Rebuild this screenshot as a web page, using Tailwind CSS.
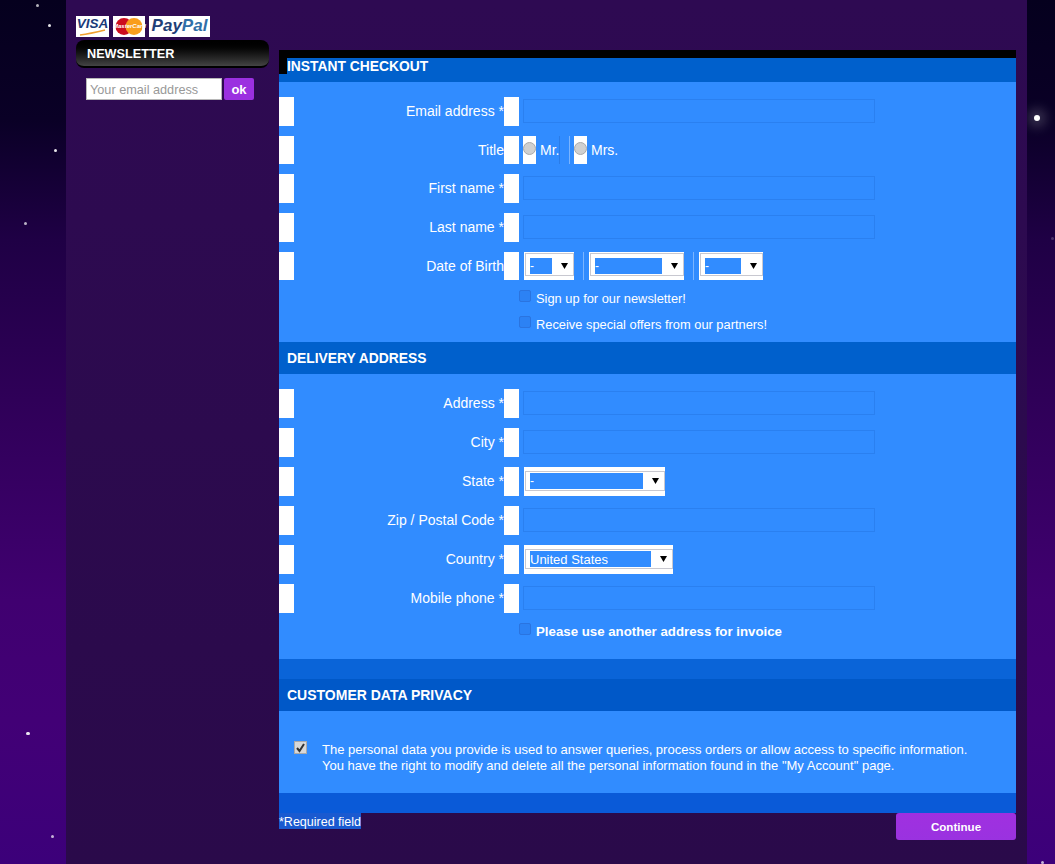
<!DOCTYPE html>
<html>
<head>
<meta charset="utf-8">
<title>Checkout</title>
<script src="https://cdn.jsdelivr.net/npm/@tailwindcss/browser@4"></script>
</head>
<body class="h-[864px] overflow-hidden bg-[linear-gradient(180deg,#05001e_0px,#0a0026_120px,#1f0045_240px,#2f0058_400px,#400070_600px,#420076_720px,#3c007a_864px)] font-['Liberation_Sans',Arial,sans-serif] text-white">

<!-- stars -->
<div class="relative h-[864px]">
  <span class="absolute left-[36px] top-[4px] w-[3px] h-[3px] rounded-full bg-white/70"></span>
  <span class="absolute left-[48px] top-[24px] w-[3px] h-[3px] rounded-full bg-white/90"></span>
  <span class="absolute left-[54px] top-[149px] w-[3px] h-[3px] rounded-full bg-white/90"></span>
  <span class="absolute left-[24px] top-[222px] w-[3px] h-[3px] rounded-full bg-white/70"></span>
  <span class="absolute left-[26px] top-[732px] w-[4px] h-[3px] rounded-full bg-white/90"></span>
  <span class="absolute left-[51px] top-[835px] w-[3px] h-[3px] rounded-full bg-white/70"></span>
  <span class="absolute left-[1034px] top-[115px] w-[6px] h-[6px] rounded-full bg-white shadow-[0_0_12px_6px_rgba(255,255,255,0.2)]"></span>
  <span class="absolute left-[1051px] top-[237px] w-[3px] h-[3px] rounded-full bg-white/20"></span>
  <span class="absolute left-[1041px] top-[861px] w-[3px] h-[3px] rounded-full bg-white/70"></span>

  <div class="absolute left-[66px] top-0 w-[961px] h-[864px] bg-gradient-to-b from-[#2e0a52] to-[#2a0a4a] flex">
    <!-- left column -->
    <aside class="w-[213px] pl-[10px] pt-[16px] shrink-0">
      <div class="flex gap-[4px] h-[21px]">
        <div class="relative w-[33px] bg-white text-center text-[13.5px] font-bold italic leading-[16px] text-[#1a3a7a]">VISA
          <svg viewBox="0 0 33 21" class="absolute left-0 top-0 w-[33px] h-[21px]"><path d="M4 19c8-1 17-3 25-5" fill="none" stroke="#f0a030" stroke-width="1.5"/></svg>
        </div>
        <div class="relative w-[32px] bg-white">
          <svg viewBox="0 0 32 21" class="w-[32px] h-[21px]"><circle cx="11" cy="10.5" r="8.5" fill="#cc0d1e"/><circle cx="21" cy="10.5" r="8.5" fill="#f99d1c"/></svg>
          <span class="absolute left-0 top-0 w-[32px] text-center text-[6px] font-bold italic leading-[21px] text-white">MasterCard</span>
        </div>
        <div class="w-[61px] bg-white text-center text-[17px] font-bold italic leading-[20px] text-[#1f3f77]">Pay<span class="text-[#2f6ea8]">Pal</span></div>
      </div>
      <div class="mt-[3px] w-[193px] h-[28px] rounded-[8px] bg-gradient-to-b from-[#000000] to-[#444444] border-b-2 border-black pl-[11px] text-[12.7px] font-bold leading-[29px]">NEWSLETTER</div>
      <div class="mt-[10px] ml-[10px] flex gap-[2px]">
        <div class="w-[136px] h-[22px] bg-white border border-[#b8b8b8] text-[12.7px] leading-[22px] pl-[3px] text-[#999999]">Your email address</div>
        <div class="w-[30px] h-[22px] rounded-[2px] bg-[#9b30e0] text-center text-[13px] font-bold leading-[23px]">ok</div>
      </div>
    </aside>

    <!-- checkout -->
    <main class="w-[737px] pt-[50px] shrink-0">
      <div class="h-[8px] bg-black"></div>
      <h2 class="relative h-[24px] bg-[#0060cc] pl-[8px] text-[13.85px] font-bold leading-[16px]">
        <span class="absolute left-0 top-0 w-[8px] h-[16px] bg-black"></span>INSTANT CHECKOUT
      </h2>
      <div class="h-[260px] bg-[#318cff] pt-[15px] text-[14px]">
        <div class="grid grid-cols-[15px_210px_15px_1fr] h-[29px] mb-[10px] items-stretch">
          <i class="bg-white"></i><label class="text-right leading-[29px] whitespace-nowrap">Email address *</label><i class="bg-white"></i>
          <div class="pl-[4px] pt-[2px]"><div class="w-[352px] h-[24px] border border-[#2a80f0]"></div></div>
        </div>
        <div class="grid grid-cols-[15px_210px_15px_1fr] h-[28px] mb-[10px] items-stretch">
          <i class="bg-white"></i><label class="text-right leading-[28px]">Title</label><i class="bg-white"></i>
          <div class="pl-[4px] flex">
            <span class="w-[13px] bg-white flex items-center justify-center"><span class="w-[13px] h-[13px] rounded-full bg-[#d0d0d0] border border-[#aaaaaa] mb-[3px]"></span></span>
            <span class="ml-[4px] w-[19px] leading-[28px]">Mr.</span>
            <span class="w-[1px] bg-[#2a7ce8]"></span>
            <span class="ml-[9px] w-[1px] bg-[#7ab4ff]"></span>
            <span class="ml-[4px] w-[13px] bg-white flex items-center justify-center"><span class="w-[13px] h-[13px] rounded-full bg-[#d0d0d0] border border-[#aaaaaa] mb-[3px]"></span></span>
            <span class="ml-[4px] leading-[28px]">Mrs.</span>
          </div>
        </div>
        <div class="grid grid-cols-[15px_210px_15px_1fr] h-[29px] mb-[10px] items-stretch">
          <i class="bg-white"></i><label class="text-right leading-[29px]">First name *</label><i class="bg-white"></i>
          <div class="pl-[4px] pt-[2px]"><div class="w-[352px] h-[24px] border border-[#2a80f0]"></div></div>
        </div>
        <div class="grid grid-cols-[15px_210px_15px_1fr] h-[29px] mb-[10px] items-stretch">
          <i class="bg-white"></i><label class="text-right leading-[29px]">Last name *</label><i class="bg-white"></i>
          <div class="pl-[4px] pt-[2px]"><div class="w-[352px] h-[24px] border border-[#2a80f0]"></div></div>
        </div>
        <div class="grid grid-cols-[15px_210px_15px_1fr] h-[28px] items-stretch">
          <i class="bg-white"></i><label class="text-right leading-[28px]">Date of Birth</label><i class="bg-white"></i>
          <div class="pl-[5px] flex">
            <div class="w-[50px] bg-white pl-[1px]"><div class="h-[23px] mt-[1px] border border-[#c8c8d0] pl-[4px] pt-[4px] flex items-start"><span class="w-[22px] h-[16px] bg-[#318cff] text-[12px] leading-[16px]">-</span><svg viewBox="0 0 7 6" class="ml-[9px] mt-[5px] w-[7px] h-[6px]"><path d="M0 0h7L3.5 6z" fill="#000"/></svg></div></div>
            <span class="ml-[9px] w-[1px] bg-[#7ab4ff]"></span>
            <div class="ml-[5px] w-[95px] bg-white pl-[1px]"><div class="h-[23px] mt-[1px] border border-[#c8c8d0] pl-[4px] pt-[4px] flex items-start"><span class="w-[67px] h-[16px] bg-[#318cff] text-[12px] leading-[16px]">-</span><svg viewBox="0 0 7 6" class="ml-[9px] mt-[5px] w-[7px] h-[6px]"><path d="M0 0h7L3.5 6z" fill="#000"/></svg></div></div>
            <span class="ml-[9px] w-[1px] bg-[#7ab4ff]"></span>
            <div class="ml-[5px] w-[64px] bg-white pl-[1px]"><div class="h-[23px] mt-[1px] border border-[#c8c8d0] pl-[4px] pt-[4px] flex items-start"><span class="w-[36px] h-[16px] bg-[#318cff] text-[12px] leading-[16px]">-</span><svg viewBox="0 0 7 6" class="ml-[9px] mt-[5px] w-[7px] h-[6px]"><path d="M0 0h7L3.5 6z" fill="#000"/></svg></div></div>
          </div>
        </div>
        <div class="mt-[10px] ml-[240px] flex h-[26px] text-[12.85px]"><span class="w-[12px] h-[12px] rounded-[2px] border border-[#2a74e0] bg-[#2c82f4]"></span><span class="ml-[5px] leading-[17px]">Sign up for our newsletter!</span></div>
        <div class="ml-[240px] flex h-[26px] text-[12.85px]"><span class="w-[12px] h-[12px] rounded-[2px] border border-[#2a74e0] bg-[#2c82f4]"></span><span class="ml-[5px] leading-[17px]">Receive special offers from our partners!</span></div>
      </div>

      <h2 class="h-[32px] bg-[#0060cc] pl-[8px] text-[13.85px] font-bold leading-[32px]">DELIVERY ADDRESS</h2>
      <div class="h-[285px] bg-[#318cff] pt-[15px] text-[14px]">
        <div class="grid grid-cols-[15px_210px_15px_1fr] h-[29px] mb-[10px] items-stretch">
          <i class="bg-white"></i><label class="text-right leading-[29px]">Address *</label><i class="bg-white"></i>
          <div class="pl-[4px] pt-[2px]"><div class="w-[352px] h-[24px] border border-[#2a80f0]"></div></div>
        </div>
        <div class="grid grid-cols-[15px_210px_15px_1fr] h-[29px] mb-[10px] items-stretch">
          <i class="bg-white"></i><label class="text-right leading-[29px]">City *</label><i class="bg-white"></i>
          <div class="pl-[4px] pt-[2px]"><div class="w-[352px] h-[24px] border border-[#2a80f0]"></div></div>
        </div>
        <div class="grid grid-cols-[15px_210px_15px_1fr] h-[29px] mb-[10px] items-stretch">
          <i class="bg-white"></i><label class="text-right leading-[29px]">State *</label><i class="bg-white"></i>
          <div class="pl-[5px]"><div class="w-[141px] h-[29px] bg-white pl-[1px] pt-[4px]"><div class="h-[20px] border border-[#c8c8d0] pl-[4px] pt-[1px] flex items-start"><span class="w-[113px] h-[16px] bg-[#318cff] text-[12px] leading-[16px]">-</span><svg viewBox="0 0 7 6" class="ml-[9px] mt-[5px] w-[7px] h-[6px]"><path d="M0 0h7L3.5 6z" fill="#000"/></svg></div></div></div>
        </div>
        <div class="grid grid-cols-[15px_210px_15px_1fr] h-[29px] mb-[10px] items-stretch">
          <i class="bg-white"></i><label class="text-right leading-[29px]">Zip / Postal Code *</label><i class="bg-white"></i>
          <div class="pl-[4px] pt-[2px]"><div class="w-[352px] h-[24px] border border-[#2a80f0]"></div></div>
        </div>
        <div class="grid grid-cols-[15px_210px_15px_1fr] h-[29px] mb-[10px] items-stretch">
          <i class="bg-white"></i><label class="text-right leading-[29px]">Country *</label><i class="bg-white"></i>
          <div class="pl-[5px]"><div class="w-[149px] h-[29px] bg-white pl-[1px] pt-[4px]"><div class="h-[20px] border border-[#c8c8d0] pl-[4px] pt-[1px] flex items-start"><span class="w-[121px] h-[16px] bg-[#318cff] text-[13px] leading-[17px]">United States</span><svg viewBox="0 0 7 6" class="ml-[9px] mt-[5px] w-[7px] h-[6px]"><path d="M0 0h7L3.5 6z" fill="#000"/></svg></div></div></div>
        </div>
        <div class="grid grid-cols-[15px_210px_15px_1fr] h-[29px] items-stretch">
          <i class="bg-white"></i><label class="text-right leading-[29px]">Mobile phone *</label><i class="bg-white"></i>
          <div class="pl-[4px] pt-[2px]"><div class="w-[352px] h-[24px] border border-[#2a80f0]"></div></div>
        </div>
        <div class="mt-[10px] ml-[240px] flex text-[13.25px] font-bold"><span class="w-[12px] h-[12px] rounded-[2px] border border-[#2a74e0] bg-[#2c82f4]"></span><span class="ml-[5px] leading-[17px]">Please use another address for invoice</span></div>
      </div>

      <div class="h-[20px] bg-[#0a64d8]"></div>
      <h2 class="h-[32px] bg-[#0058c8] pl-[8px] text-[14px] font-bold leading-[32px]">CUSTOMER DATA PRIVACY</h2>
      <div class="h-[82px] bg-[#318cff] flex pt-[30px] pl-[15px]">
        <span class="w-[13px] h-[13px] bg-[#d8d8d8] border border-[#aaaaaa]"><svg viewBox="0 0 11 11" class="w-[11px] h-[11px]"><path d="M2 6l2.5 3L9 2" fill="none" stroke="#333" stroke-width="2"/></svg></span>
        <p class="ml-[15px] text-[13px] leading-[16px] pt-[1px]">The personal data you provide is used to answer queries, process orders or allow access to specific information.<br>You have the right to modify and delete all the personal information found in the "My Account" page.</p>
      </div>
      <div class="h-[20px] bg-[#0a5ad8]"></div>
      <div class="flex justify-between items-start">
        <span class="h-[16px] bg-[#1a5ad0] text-[12.5px] leading-[18px]">*Required field</span>
        <button class="w-[120px] h-[27px] rounded-[3px] bg-gradient-to-b from-[#a030e0] to-[#9a32e0] text-[11.6px] font-bold">Continue</button>
      </div>
    </main>
  </div>
</div>
</body>
</html>
